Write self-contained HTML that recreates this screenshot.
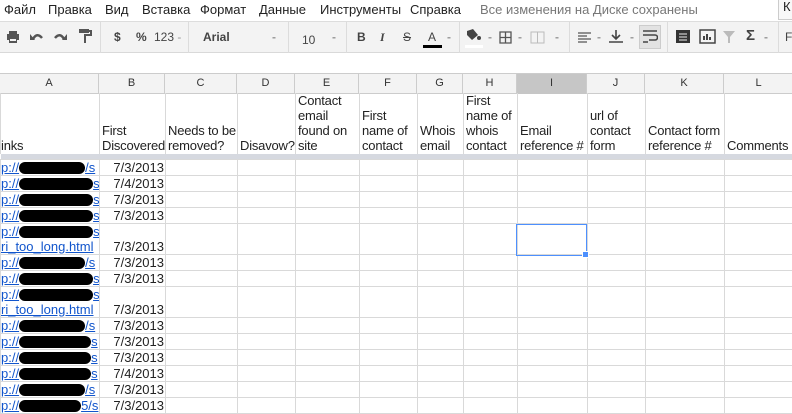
<!DOCTYPE html>
<html><head><meta charset="utf-8"><style>
*{margin:0;padding:0;box-sizing:border-box}
body{width:792px;height:413px;overflow:hidden;background:#fff;font-family:"Liberation Sans",Arial,sans-serif;font-size:13px;color:#222;position:relative}
.menu{position:absolute;top:0;left:0;height:20px;width:792px}
.menu span{position:absolute;top:2px;font-size:13px;color:#222}
.tb{position:absolute;top:21px;left:0;width:792px;height:32px;background:#f3f3f3;border-top:1px solid #ddd;border-bottom:1px solid #d9d9d9}
.tb .i{position:absolute;top:8px;font-size:12px;color:#444;font-weight:bold}
.sep{position:absolute;top:0;width:1px;height:31px;background:#dcdcdc}
.ch{position:absolute;top:73px;left:0;width:792px;height:21px;background:#f3f3f3;border-top:1px solid #ccc;border-bottom:1px solid #ccc}
.ch div{position:absolute;top:0;height:20px;border-right:1px solid #ccc;text-align:center;font-size:11px;line-height:19px;color:#333}
table{position:absolute;top:93px;left:0;width:793px;border-collapse:collapse;table-layout:fixed}
td{border:1px solid #d9d9d9;vertical-align:bottom;padding:0 1px 0 2px;line-height:15px;overflow:hidden;white-space:nowrap}
tr.h td{white-space:normal;height:61px;line-height:15px;padding-bottom:1px;border-bottom:none;border-top:none;letter-spacing:-0.2px}
tr.fz td{height:5px;background:#d6d9e0;border:none;padding:0}
td.d{text-align:right}
td.a{padding:0;color:#15c}
u{color:#15c}
.b{display:inline-block;background:#000;border-radius:6px;height:12px;vertical-align:-2px}
.sel{position:absolute;left:516px;top:224px;width:71px;height:32px;border:1px solid #4d90fe}
.sel:after{content:"";position:absolute;right:-3px;bottom:-3px;width:5px;height:5px;background:#4d90fe;border:1px solid #fff}
</style></head><body>
<div class="menu">
<span style="left:4px">Файл</span><span style="left:48px">Правка</span><span style="left:105px">Вид</span><span style="left:142px">Вставка</span><span style="left:200px">Формат</span><span style="left:259px">Данные</span><span style="left:320px">Инструменты</span><span style="left:410px">Справка</span><span style="left:480px;color:#777">Все изменения на Диске сохранены</span>
<span style="left:778px;top:-2px;width:20px;height:22px;border:1px solid #ccc;background:#f8f8f8;padding-left:4px">К</span>
</div>
<div class="tb">
<svg style="position:absolute;left:6px;top:8px" width="14" height="14"><rect x="3" y="1" width="8" height="3" fill="#555"/><rect x="1" y="4" width="12" height="6" fill="#555"/><rect x="3" y="8" width="8" height="5" fill="#555"/><rect x="4" y="9" width="6" height="2" fill="#f3f3f3"/></svg>
<svg style="position:absolute;left:30px;top:9px" width="14" height="12"><path d="M3 8 Q7 1 12 7" stroke="#555" stroke-width="2.5" fill="none"/><path d="M0 3 L5 9 L0 9Z" fill="#555"/></svg>
<svg style="position:absolute;left:53px;top:9px" width="14" height="12"><path d="M11 8 Q7 1 2 7" stroke="#555" stroke-width="2.5" fill="none"/><path d="M14 3 L9 9 L14 9Z" fill="#555"/></svg>
<svg style="position:absolute;left:78px;top:6px" width="14" height="18"><rect x="1" y="1" width="10" height="4" fill="#555"/><path d="M11 3h2v4H7v8" stroke="#555" stroke-width="2" fill="none"/></svg>
<div class="sep" style="left:100px"></div>
<span class="i" style="left:114px">$</span><span class="i" style="left:136px">%</span><span class="i" style="left:154px;font-weight:normal">123 <span style="color:#999">-</span></span>
<div class="sep" style="left:188px"></div>
<span class="i" style="left:203px">Arial</span><span class="i" style="left:272px;color:#999">-</span>
<div class="sep" style="left:288px"></div>
<span class="i" style="left:302px;top:11px;font-weight:normal">10</span><span class="i" style="left:332px;color:#999">-</span>
<div class="sep" style="left:346px"></div>
<span class="i" style="left:357px">B</span><span class="i" style="left:380px;font-style:italic;font-family:'Liberation Serif'">I</span><span class="i" style="left:403px;text-decoration:line-through;font-weight:normal">S</span>
<span class="i" style="left:428px;font-weight:normal">A</span><div style="position:absolute;left:423px;top:23px;width:19px;height:3px;background:#000"></div><span class="i" style="left:447px;color:#999">-</span>
<div class="sep" style="left:459px"></div>
<svg style="position:absolute;left:464px;top:6px" width="18" height="14"><path d="M3 3 L9 1 L14 7 L8 12 L3 7Z" fill="#444"/><circle cx="15" cy="10" r="2" fill="#444"/></svg><div style="position:absolute;left:465px;top:23px;width:18px;height:3px;background:#fff"></div>
<span class="i" style="left:488px;color:#999">-</span>
<svg style="position:absolute;left:499px;top:9px" width="13" height="13"><path d="M1 1h11v11H1zM6.5 1v11M1 6.5h11" stroke="#555" fill="none" stroke-width="1.3"/></svg><span class="i" style="left:518px;color:#999">-</span>
<svg style="position:absolute;left:530px;top:9px" width="15" height="13"><path d="M1 1h13v11H1zM7.5 1v11" stroke="#bbb" fill="none"/></svg><span class="i" style="left:555px;color:#999">-</span>
<div class="sep" style="left:569px"></div>
<svg style="position:absolute;left:578px;top:10px" width="13" height="11"><path d="M0 1h13M0 4h9M0 7h13M0 10h9" stroke="#555" stroke-width="1.3"/></svg><span class="i" style="left:597px;color:#999">-</span>
<svg style="position:absolute;left:609px;top:7px" width="14" height="14"><path d="M7 1v9M3 6l4 4 4-4M0 13h14" stroke="#444" stroke-width="1.6" fill="none"/></svg><span class="i" style="left:630px;color:#999">-</span>
<div style="position:absolute;left:639px;top:3px;width:22px;height:24px;background:#e2e2e2;border:1px solid #ccc"></div>
<svg style="position:absolute;left:643px;top:8px" width="15" height="14"><path d="M0 1h14M0 5h12a2.5 2.5 0 0 1 0 5H6M0 12h5" stroke="#444" stroke-width="1.6" fill="none"/></svg>
<div class="sep" style="left:667px"></div>
<svg style="position:absolute;left:676px;top:8px" width="14" height="13"><rect width="14" height="13" fill="#333"/><path d="M3 4h8M3 7h8M3 10h8" stroke="#eee"/></svg>
<svg style="position:absolute;left:699px;top:7px" width="17" height="15"><rect x="1" y="1" width="15" height="13" stroke="#444" fill="none" stroke-width="1.5"/><path d="M5 11V7M8 11V5M11 11V8" stroke="#444" stroke-width="2"/></svg>
<svg style="position:absolute;left:723px;top:9px" width="12" height="12"><path d="M0 0h12L7 6v6H5V6Z" fill="#bbb"/></svg>
<span class="i" style="left:746px;font-size:15px;top:5px">Σ</span><span class="i" style="left:764px;color:#999">-</span>
<div class="sep" style="left:778px"></div><span class="i" style="left:785px;font-weight:normal">F</span>
</div>
<div class="ch">
<div style="left:0;width:99px">A</div><div style="left:99px;width:66px">B</div><div style="left:165px;width:72px">C</div><div style="left:237px;width:58px">D</div><div style="left:295px;width:64px">E</div><div style="left:359px;width:58px">F</div><div style="left:417px;width:46px">G</div><div style="left:463px;width:54px">H</div><div style="left:517px;width:70px;background:#c6c6c6">I</div><div style="left:587px;width:58px">J</div><div style="left:645px;width:79px">K</div><div style="left:724px;width:69px;border:none">L</div>
</div>
<table>
<colgroup><col style="width:99px"><col style="width:66px"><col style="width:72px"><col style="width:58px"><col style="width:64px"><col style="width:58px"><col style="width:46px"><col style="width:54px"><col style="width:70px"><col style="width:58px"><col style="width:79px"><col style="width:69px"></colgroup>
<tr class="h"><td style="padding-left:0">inks</td><td>First Discovered</td><td>Needs to be removed?</td><td>Disavow?</td><td>Contact email found on site</td><td>First name of contact</td><td>Whois email</td><td>First name of whois contact</td><td>Email reference #</td><td>url of contact form</td><td>Contact form reference #</td><td>Comments</td></tr>
<tr class="fz"><td colspan="12"></td></tr>
<tr style="height:16px"><td class="a"><u>p://<span class="b" style="width:66px"></span>/s</u></td><td class="d">7/3/2013</td><td></td><td></td><td></td><td></td><td></td><td></td><td></td><td></td><td></td><td></td></tr>
<tr style="height:16px"><td class="a"><u>p://<span class="b" style="width:74px"></span>s</u></td><td class="d">7/4/2013</td><td></td><td></td><td></td><td></td><td></td><td></td><td></td><td></td><td></td><td></td></tr>
<tr style="height:16px"><td class="a"><u>p://<span class="b" style="width:74px"></span>s</u></td><td class="d">7/3/2013</td><td></td><td></td><td></td><td></td><td></td><td></td><td></td><td></td><td></td><td></td></tr>
<tr style="height:16px"><td class="a"><u>p://<span class="b" style="width:74px"></span>s</u></td><td class="d">7/3/2013</td><td></td><td></td><td></td><td></td><td></td><td></td><td></td><td></td><td></td><td></td></tr>
<tr style="height:31px"><td class="a"><u>p://<span class="b" style="width:74px"></span>s</u><br><u>ri_too_long.html</u></td><td class="d">7/3/2013</td><td></td><td></td><td></td><td></td><td></td><td></td><td></td><td></td><td></td><td></td></tr>
<tr style="height:16px"><td class="a"><u>p://<span class="b" style="width:66px"></span>/s</u></td><td class="d">7/3/2013</td><td></td><td></td><td></td><td></td><td></td><td></td><td></td><td></td><td></td><td></td></tr>
<tr style="height:16px"><td class="a"><u>p://<span class="b" style="width:74px"></span>s</u></td><td class="d">7/3/2013</td><td></td><td></td><td></td><td></td><td></td><td></td><td></td><td></td><td></td><td></td></tr>
<tr style="height:31px"><td class="a"><u>p://<span class="b" style="width:74px"></span>s</u><br><u>ri_too_long.html</u></td><td class="d">7/3/2013</td><td></td><td></td><td></td><td></td><td></td><td></td><td></td><td></td><td></td><td></td></tr>
<tr style="height:16px"><td class="a"><u>p://<span class="b" style="width:66px"></span>/s</u></td><td class="d">7/3/2013</td><td></td><td></td><td></td><td></td><td></td><td></td><td></td><td></td><td></td><td></td></tr>
<tr style="height:16px"><td class="a"><u>p://<span class="b" style="width:72px"></span>s</u></td><td class="d">7/3/2013</td><td></td><td></td><td></td><td></td><td></td><td></td><td></td><td></td><td></td><td></td></tr>
<tr style="height:16px"><td class="a"><u>p://<span class="b" style="width:72px"></span>s</u></td><td class="d">7/3/2013</td><td></td><td></td><td></td><td></td><td></td><td></td><td></td><td></td><td></td><td></td></tr>
<tr style="height:16px"><td class="a"><u>p://<span class="b" style="width:72px"></span>s</u></td><td class="d">7/4/2013</td><td></td><td></td><td></td><td></td><td></td><td></td><td></td><td></td><td></td><td></td></tr>
<tr style="height:16px"><td class="a"><u>p://<span class="b" style="width:66px"></span>/s</u></td><td class="d">7/3/2013</td><td></td><td></td><td></td><td></td><td></td><td></td><td></td><td></td><td></td><td></td></tr>
<tr style="height:16px"><td class="a"><u>p://<span class="b" style="width:62px"></span>5/s</u></td><td class="d">7/3/2013</td><td></td><td></td><td></td><td></td><td></td><td></td><td></td><td></td><td></td><td></td></tr>
</table>
<div class="sel"></div>
</body></html>
